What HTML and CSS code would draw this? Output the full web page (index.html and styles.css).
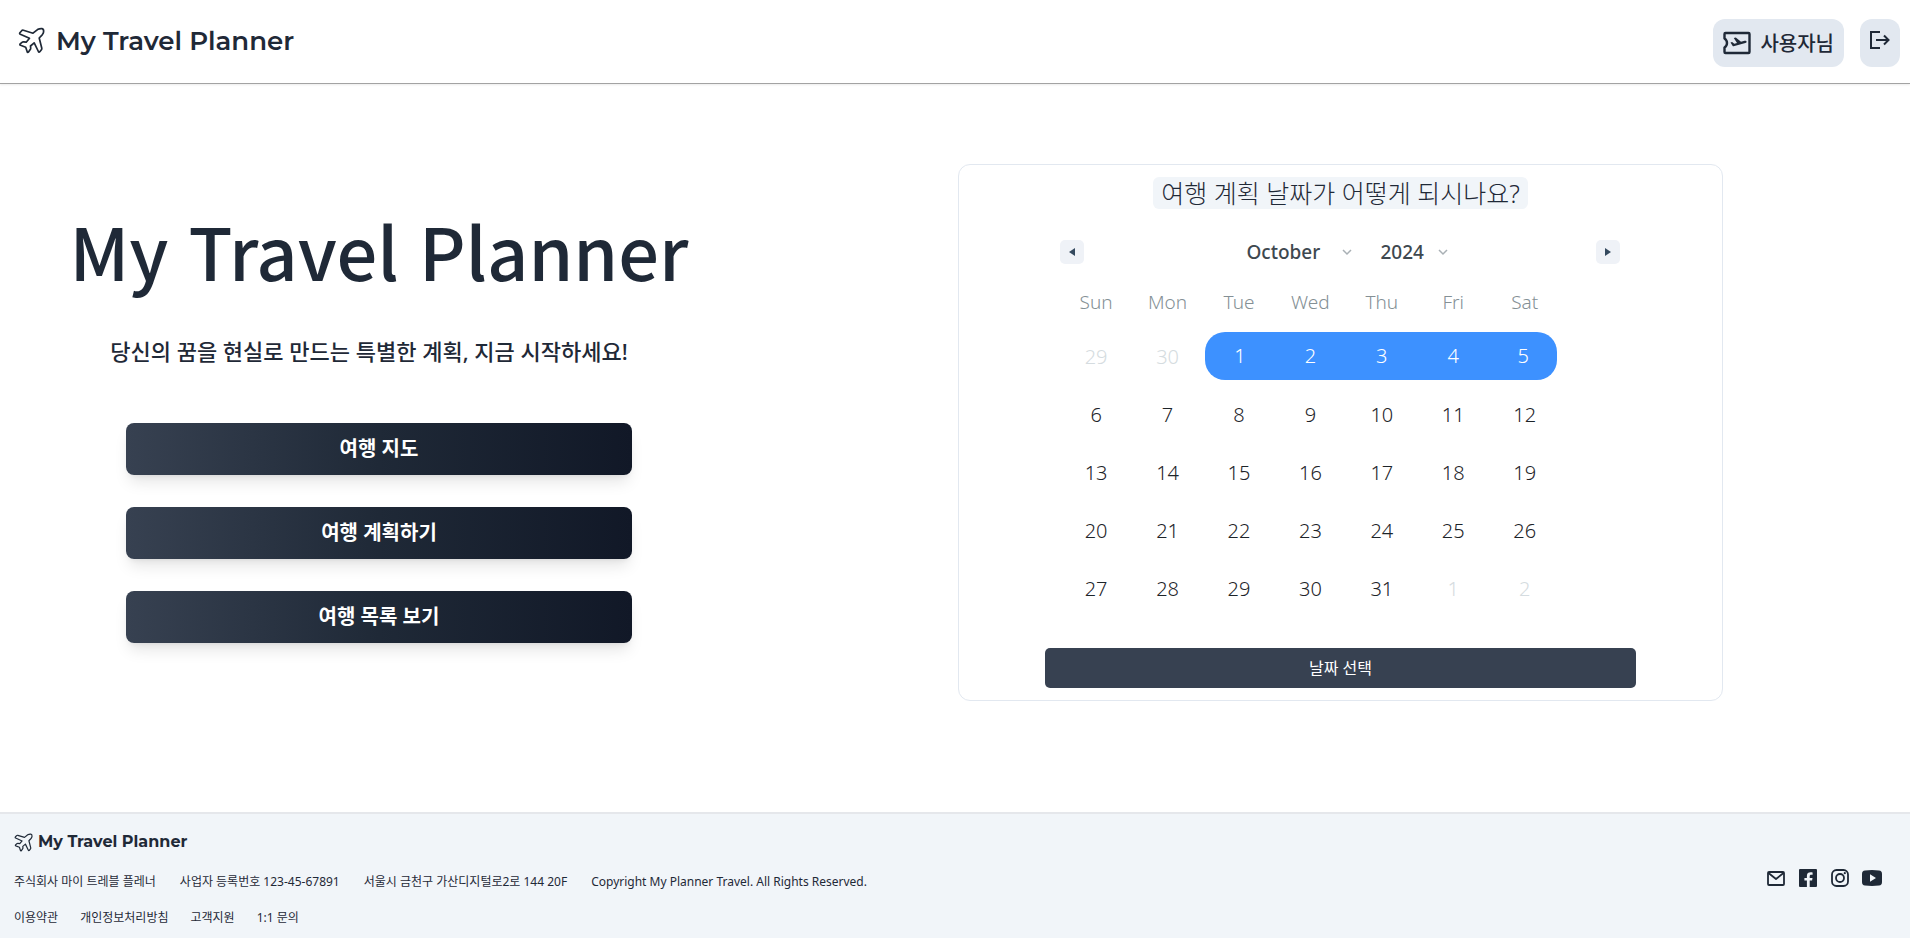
FILE: index.html
```html
<!DOCTYPE html>
<html lang="ko">
<head>
<meta charset="utf-8">
<title>My Travel Planner</title>
<link rel="stylesheet" href="styles.css">
</head>
<body>
<svg class="sprite" aria-hidden="true">
  <symbol id="plane" viewBox="-1 -1 27 27">
    <path fill="none" stroke="currentColor" stroke-linejoin="round" stroke-linecap="round" d="M14 5.200 18.500 1.600Q20.500.4 23 .6 24.900 1 24.600 3.800 24.400 5.400 23.200 6.800L20.200 10 22.800 20.200Q23 21 22.400 21.700L20.800 23.700Q20 24.600 19.400 23.500L15.200 14.800 11.500 18 11.700 20.200Q11.700 21 11.200 21.600L9.500 24Q8.700 25 8.200 23.800L6.700 19.200 1.600 17.300Q.4 16.800 1.200 15.900L3 14.300Q3.700 13.700 4.500 13.800L7.200 14.200 10.500 10.300 1.300 6.200Q.2 5.600.9 4.700L2.700 2.700Q3.400 2 4.400 2.300z"/>
  </symbol>
</svg>
<header class="header">
  <a class="brand" href="#"><svg class="brand-icon"><use href="#plane"/></svg>My Travel Planner</a>
  <div class="header-actions">
    <button class="user" type="button">
      <svg class="user-icon" viewBox="0 0 28 24" fill="none" stroke="currentColor" stroke-width="2.400" stroke-linejoin="round"><path d="M2.500 2h23q1 0 1 1v18q0 1-1 1h-23q-1 0-1-1v-4.500C3 15.500 4 14 4 12S3 8.500 1.500 7.500V3q0-1 1-1z"/><path fill="currentColor" stroke="none" d="m7.500 11.500 1.600-.4 2.200 1.700 2.700-.7-3.200-5.200 2-.5 5.200 4.400 3.600-1c2.100-.5 2.800 1.700.8 2.300l-11.800 3.200q-.6.100-.9-.4z"/></svg>
      <span>사용자님</span>
    </button>
    <button class="logout" type="button" aria-label="로그아웃">
      <svg class="logout-icon" viewBox="0 0 20 18" fill="none" stroke="currentColor" stroke-width="2"><path d="M10 1H1v16h9M6 9h12M14 4.500 18.500 9 14 13.500"/></svg>
    </button>
  </div>
</header>
<main class="main">
  <section class="hero">
    <h1 class="hero-title">My Travel Planner</h1>
    <p class="hero-text">당신의 꿈을 현실로 만드는 특별한 계획, 지금 시작하세요!</p>
    <nav class="menu">
      <a class="menu-link" href="#">여행 지도</a>
      <a class="menu-link" href="#">여행 계획하기</a>
      <a class="menu-link" href="#">여행 목록 보기</a>
    </nav>
  </section>
  <section class="card">
    <h2 class="card-title">여행 계획 날짜가 어떻게 되시나요?</h2>
    <div class="calendar">
      <div class="calendar-nav">
        <button class="step" type="button" aria-label="이전 달"><svg class="step-icon" viewBox="0 0 6 8"><path d="M6 0v8L0 4z"/></svg></button>
        <div class="pickers">
          <select class="picker picker-month" aria-label="월"><option>October</option></select>
          <select class="picker picker-year" aria-label="연도"><option>2024</option></select>
        </div>
        <button class="step" type="button" aria-label="다음 달"><svg class="step-icon" viewBox="0 0 6 8"><path d="M0 0v8l6-4z"/></svg></button>
      </div>
      <table class="days">
        <thead><tr><th>Sun</th><th>Mon</th><th>Tue</th><th>Wed</th><th>Thu</th><th>Fri</th><th>Sat</th></tr></thead>
        <tbody>
          <tr><td class="out">29</td><td class="out">30</td><td class="sel first"><span>1</span></td><td class="sel"><span>2</span></td><td class="sel"><span>3</span></td><td class="sel"><span>4</span></td><td class="sel last"><span>5</span></td></tr>
          <tr><td>6</td><td>7</td><td>8</td><td>9</td><td>10</td><td>11</td><td>12</td></tr>
          <tr><td>13</td><td>14</td><td>15</td><td>16</td><td>17</td><td>18</td><td>19</td></tr>
          <tr><td>20</td><td>21</td><td>22</td><td>23</td><td>24</td><td>25</td><td>26</td></tr>
          <tr><td>27</td><td>28</td><td>29</td><td>30</td><td>31</td><td class="out">1</td><td class="out">2</td></tr>
        </tbody>
      </table>
    </div>
    <button class="choose" type="button">날짜 선택</button>
  </section>
</main>
<footer class="footer">
  <div class="footer-info">
    <a class="brand brand-small" href="#"><svg class="brand-icon"><use href="#plane"/></svg>My Travel Planner</a>
    <div class="footer-row company"><span>주식회사 마이 트레블 플레너</span><span>사업자 등록번호 123-45-67891</span><span>서울시 금천구 가산디지털로2로 144 20F</span><span>Copyright My Planner Travel. All Rights Reserved.</span></div>
    <div class="footer-row"><a href="#">이용약관</a><a href="#">개인정보처리방침</a><a href="#">고객지원</a><a href="#">1:1 문의</a></div>
  </div>
  <div class="social">
    <a href="#" aria-label="메일"><svg viewBox="0 0 20 20" fill="none" stroke="currentColor" stroke-width="1.800" stroke-linejoin="round"><rect x="2" y="4" width="16" height="13" rx="1"/><path d="m2.500 5 7.500 6 7.500-6"/></svg></a>
    <a href="#" aria-label="페이스북"><svg viewBox="0 0 20 20"><path fill="currentColor" d="M2 1h16q1 0 1 1v16q0 1-1 1h-6.300v-6.400h2.400l.4-2.600h-2.800V8.300c0-.9.400-1.500 1.500-1.500h1.400V4.500c-3.700-.6-5.700.4-5.700 3.400V10H6.400v2.600h2.500V19H2q-1 0-1-1V2q0-1 1-1"/></svg></a>
    <a href="#" aria-label="인스타그램"><svg viewBox="0 0 20 20" fill="none" stroke="currentColor" stroke-width="1.800"><rect x="2" y="2" width="16" height="16" rx="4.500"/><circle cx="10" cy="10" r="4"/><circle cx="14.800" cy="5.200" r="1.100" fill="currentColor" stroke="none"/></svg></a>
    <a href="#" aria-label="유튜브"><svg viewBox="0 0 20 20"><path fill="currentColor" fill-rule="evenodd" d="M3 2.500q7-.8 14 0 3 .3 3 3.500v8q0 3.200-3 3.500-7 .8-14 0-3-.3-3-3.500V6q0-3.200 3-3.500M8 6.300v7.400l6-3.700z"/></svg></a>
  </div>
</footer>
</body>
</html>
```
FILE: styles.css
```css
* { box-sizing: border-box; }
body {
  margin: 0;
  min-height: 100vh;
  display: flex;
  flex-direction: column;
  background: #fff;
  color: #1f2937;
  font-family: "Noto Sans", "Noto Sans CJK KR", sans-serif;
  font-weight: 300;
}
a { color: inherit; text-decoration: none; }
button { border: 0; padding: 0; font: inherit; color: inherit; cursor: pointer; }
.sprite { position: absolute; width: 0; height: 0; }

.header {
  display: flex;
  align-items: center;
  justify-content: space-between;
  height: 84px;
  padding: 0 10px 2px 18px;
  border-bottom: 1px solid #a3a3a3;
  box-shadow: 0 1px 2px rgba(0, 0, 0, .08);
}
.brand {
  display: flex;
  align-items: center;
  gap: 11px;
  font-family: Montserrat, Inter, sans-serif;
  font-size: 26px;
  font-weight: 600;
}
.brand-icon { width: 27px; height: 27px; stroke-width: 1.7px; }
.header-actions { display: flex; gap: 16px; padding-top: 4px; }
.user {
  display: flex;
  align-items: center;
  gap: 9px;
  height: 48px;
  padding: 0 10px;
  border-radius: 12px;
  background: #e2e8f0;
  font-size: 20px;
  font-weight: 500;
}
.user-icon { width: 28px; height: 24px; }
.logout {
  display: flex;
  justify-content: center;
  width: 40px;
  height: 48px;
  padding-top: 12px;
  border-radius: 12px;
  background: #e2e8f0;
}
.logout-icon { width: 20px; height: 18px; }

.main {
  flex: 1;
  display: grid;
  grid-template-columns: 40% 60%;
  align-items: start;
  padding: 80px 0;
}
.hero {
  display: flex;
  flex-direction: column;
  align-items: center;
  padding: 38px 6px 0 0;
}
.hero-title {
  margin: 0;
  font-family: "Noto Sans CJK KR", sans-serif;
  font-size: 72px;
  font-weight: 500;
  line-height: 96px;
}
.hero-text {
  margin: 39px 0 0;
  padding-right: 20px;
  font-size: 22px;
  font-weight: 500;
  line-height: 28px;
}
.menu { display: grid; gap: 32px; width: calc(100% * 2 / 3); margin-top: 58px; }
.menu-link {
  padding: 12px;
  border-radius: 8px;
  background: linear-gradient(to right, #374151, #1f2937, #111827);
  box-shadow: 0 10px 15px -3px rgba(0, 0, 0, .1), 0 4px 6px -4px rgba(0, 0, 0, .1);
  color: #fff;
  font-size: 20px;
  font-weight: 700;
  line-height: 28px;
  text-align: center;
}

.card {
  display: flex;
  flex-direction: column;
  align-items: center;
  width: 66.8%;
  margin-left: 16.9%;
  padding: 12px;
  border: 1px solid #e2e8f0;
  border-radius: 12px;
}
.card-title {
  margin: 0;
  padding: 0 8px;
  border-radius: 6px;
  background: #f1f5f9;
  font-size: 25px;
  font-weight: 300;
  line-height: 32px;
}
.calendar { width: 560px; padding-top: 23px; }
.calendar-nav { display: flex; align-items: center; justify-content: space-between; height: 40px; }
.step {
  display: flex;
  align-items: center;
  justify-content: center;
  width: 24px;
  height: 24px;
  border-radius: 5px;
  background: #eff2f7;
}
.step-icon { width: 6px; height: 8px; fill: #34495e; }
.pickers { display: flex; gap: 28px; padding-left: 14px; }
.picker {
  appearance: none;
  border: 0;
  padding: 0;
  background: url('data:image/svg+xml;utf8,<svg xmlns="http://www.w3.org/2000/svg" width="10" height="7"><path d="M1 1l4 4 4-4" fill="none" stroke="%23a9b0b5" stroke-width="1.500"/></svg>') no-repeat right center;
  color: #3e484f;
  font: 500 19px/28px "Noto Sans", sans-serif;
}
.picker-month { width: 106px; }
.picker-year { width: 68px; }
.days {
  width: 500px;
  margin-top: 5px;
  table-layout: fixed;
  border-collapse: collapse;
  font-size: 20px;
  text-align: center;
}
.days th { height: 50px; padding: 0; color: #849095; font-size: 19px; font-weight: 300; }
.days td { height: 58px; padding: 0; color: #1d2429; }
.days .out { color: #d5dce0; }
.sel span { display: block; background: #3d91ff; color: #fff; line-height: 48px; }
.first span { margin-left: 2px; border-radius: 20px 0 0 20px; }
.last span { margin-right: 3px; border-radius: 0 20px 20px 0; }
.choose {
  width: 80%;
  margin-top: 31px;
  border-radius: 5px;
  background: #374151;
  color: #fff;
  font-size: 16px;
  font-weight: 400;
  line-height: 40px;
}

.footer {
  display: flex;
  align-items: center;
  justify-content: space-between;
  padding: 16px 28px 8px 14px;
  border-top: 2px solid #e5e7eb;
  background: #f1f5f9;
  font-size: 12px;
  font-weight: 400;
  line-height: 24px;
}
.footer-row { display: flex; gap: 22px; margin-top: 12px; }
.company { gap: 24px; margin-top: 16px; }
.brand-small { gap: 5px; font-size: 16px; font-weight: 700; }
.brand-small .brand-icon { width: 19px; height: 19px; }
.social { display: flex; gap: 12px; padding-bottom: 4px; }
.social svg { display: block; width: 20px; height: 20px; }
```
